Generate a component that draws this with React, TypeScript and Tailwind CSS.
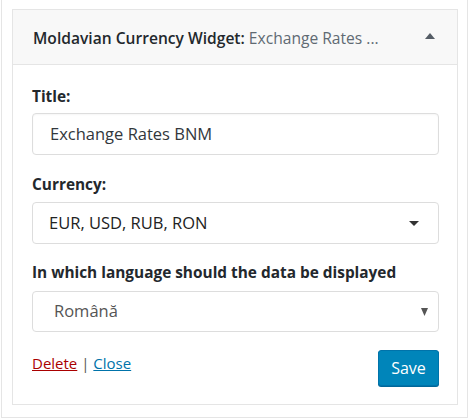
import React from "react";

export default function App() {
  const font = { fontFamily: '"Open Sans", "Noto Sans", sans-serif' };
  return (
    <div className="w-[469px] h-[419px] bg-white pl-[1px]" style={font}>
      <div className="w-[467px] h-[418px] border border-t-0 border-[#e5e5e5] pl-[10px] pr-[9px] pt-[9px]">
        <div className="w-[446px] h-[396px] border border-[#e5e5e5] bg-white flex flex-col">
          <div className="h-[55px] bg-[#f8f8f8] border-b border-[#e5e5e5] flex items-center pl-[20px] pr-[22px] pt-[1px]">
            <div className="flex-1 text-[15.6px] leading-[20px] whitespace-nowrap text-[#23282d] font-semibold">
              Moldavian Currency Widget:<span className="text-[#606a73] font-normal"> Exchange Rates ...</span>
            </div>
            <svg width="10" height="6" viewBox="0 0 10 6" className="mb-[4px]">
              <path d="M0 6 L5 0 L10 6 Z" fill="#555d66" />
            </svg>
          </div>
          <div className="flex flex-col pl-[19px] pr-[18px] pt-[22px]">
            <label className="text-[15.4px] leading-[20px] font-bold text-[#23282d]">Title:</label>
            <div className="mt-[6px] h-[42px] border border-[#dddddd] rounded-[4px] flex items-center pl-[17px] text-[16.5px] text-[#32373c] shadow-[inset_0_1px_2px_rgba(0,0,0,0.04)]">
              Exchange Rates BNM
            </div>
            <label className="mt-[20px] text-[15.4px] leading-[20px] font-bold text-[#23282d]">Currency:</label>
            <div className="mt-[7px] h-[42px] border border-[#dddddd] rounded-[4px] flex items-center pl-[16px] pr-[19px] text-[16.5px] text-[#222]">
              <span className="flex-1">EUR, USD, RUB, RON</span>
              <svg width="10" height="5" viewBox="0 0 10 5">
                <path d="M0 0 L10 0 L5 5 Z" fill="#333" />
              </svg>
            </div>
            <label className="mt-[19px] text-[15.4px] leading-[20px] font-bold text-[#23282d]">In which language should the data be displayed</label>
            <div className="mt-[8px] h-[41px] border border-[#dddddd] rounded-[4px] flex items-center pl-[21px] pr-[10px] text-[16.5px] text-[#555]">
              <span className="flex-1">Română</span>
              <svg width="7" height="8" viewBox="0 0 7 8">
                <path d="M0 0 L7 0 L3.5 8 Z" fill="#555" />
              </svg>
            </div>
            <div className="mt-[18px] flex items-start justify-between">
              <div className="text-[15px] leading-[20px] pt-[3px] text-[#555]">
                <a className="text-[#a00] underline">Delete</a>
                <span> | </span>
                <a className="text-[#0073aa] underline">Close</a>
              </div>
              <button className="w-[61px] h-[36px] rounded-[3px] bg-[#0085ba] border border-[#0073aa] shadow-[0_1px_0_#006799] text-white text-[16px] leading-none">
                Save
              </button>
            </div>
          </div>
        </div>
      </div>
    </div>
  );
}
